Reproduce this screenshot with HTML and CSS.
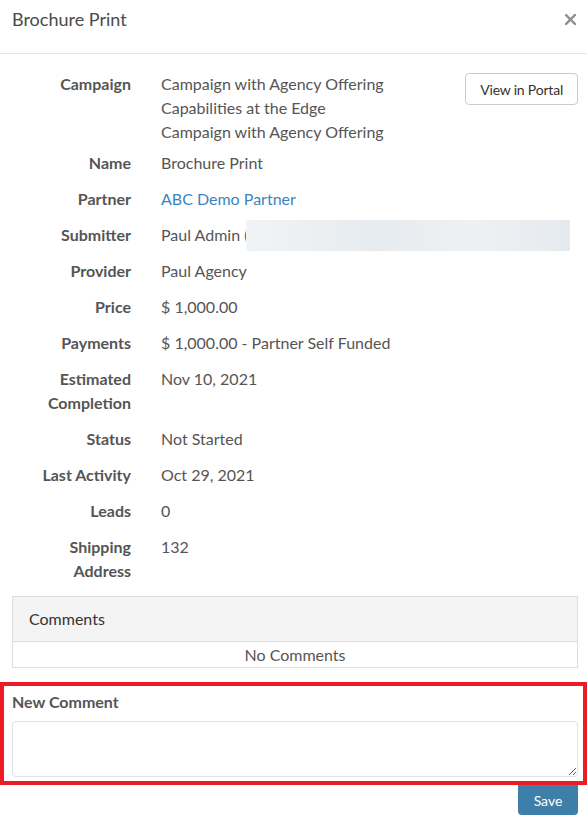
FILE: index.html
```html
<!DOCTYPE html>
<html>
<head>
    <title>Brochure Print</title>
    <link rel="stylesheet" href="styles.css">
</head>
<body>
    <div class="modal">
        <div class="modal-header">
            <h4 class="modal-title">Brochure Print</h4>
            <button class="close" aria-label="Close">
                <svg width="11" height="11" viewBox="0 0 11 11">
                    <path d="M1 1 L10 10 M10 1 L1 10" stroke="#8f8f8f" stroke-width="2.4" stroke-linecap="square"/>
                </svg>
            </button>
        </div>

        <div class="modal-body">
            <div class="details">
                <div class="row row-campaign">
                    <div class="label">Campaign</div>
                    <div class="value value-campaign">
                        <div class="lines">
                            <div>Campaign with Agency Offering</div>
                            <div>Capabilities at the Edge</div>
                            <div>Campaign with Agency Offering</div>
                        </div>
                        <button class="btn-default">View in Portal</button>
                    </div>
                </div>
                <div class="row">
                    <div class="label">Name</div>
                    <div class="value">Brochure Print</div>
                </div>
                <div class="row">
                    <div class="label">Partner</div>
                    <div class="value"><a href="#">ABC Demo Partner</a></div>
                </div>
                <div class="row">
                    <div class="label">Submitter</div>
                    <div class="value value-submitter">Paul Admin (<span class="redacted"></span></div>
                </div>
                <div class="row">
                    <div class="label">Provider</div>
                    <div class="value">Paul Agency</div>
                </div>
                <div class="row">
                    <div class="label">Price</div>
                    <div class="value">$ 1,000.00</div>
                </div>
                <div class="row">
                    <div class="label">Payments</div>
                    <div class="value">$ 1,000.00 - Partner Self Funded</div>
                </div>
                <div class="row">
                    <div class="label">Estimated<br>Completion</div>
                    <div class="value">Nov 10, 2021</div>
                </div>
                <div class="row">
                    <div class="label">Status</div>
                    <div class="value">Not Started</div>
                </div>
                <div class="row">
                    <div class="label">Last Activity</div>
                    <div class="value">Oct 29, 2021</div>
                </div>
                <div class="row">
                    <div class="label">Leads</div>
                    <div class="value">0</div>
                </div>
                <div class="row">
                    <div class="label">Shipping<br>Address</div>
                    <div class="value">132</div>
                </div>
            </div>

            <div class="panel">
                <div class="panel-heading">Comments</div>
                <div class="panel-body">No Comments</div>
            </div>

            <div class="new-comment">
                <label for="comment">New Comment</label>
                <textarea id="comment"></textarea>
            </div>

            <div class="actions">
                <button class="btn-primary">Save</button>
            </div>
        </div>
    </div>
</body>
</html>
```

FILE: styles.css
```css
body {
    margin: 0;
    background: #fff;
    font-family: Lato, "Open Sans", sans-serif;
    font-size: 16px;
    color: #555;
}
.modal {
    width: 587px;
}
.modal-header {
    display: flex;
    justify-content: space-between;
    align-items: flex-start;
    height: 46px;
    padding: 7px 11px 0 12px;
    border-bottom: 1px solid #e5e5e5;
}
.modal-title {
    margin: 0;
    font-size: 18px;
    font-weight: normal;
    line-height: 24px;
    color: #4a4a4a;
}
.close {
    background: none;
    border: none;
    padding: 0;
    margin-top: 6px;
    cursor: pointer;
}
.modal-body {
    padding: 12px 9px 12px 12px;
}
.row {
    display: grid;
    grid-template-columns: 119px 1fr;
    column-gap: 30px;
    padding: 6px 0;
    line-height: 24px;
}
.row-campaign {
    padding-bottom: 1px;
}
.label {
    text-align: right;
    font-weight: bold;
    color: #555;
}
.value-campaign {
    display: flex;
    justify-content: space-between;
    align-items: flex-start;
}
.value a {
    color: #3a85bd;
    text-decoration: none;
}
.value-submitter {
    display: flex;
    align-items: center;
    height: 24px;
}
.redacted {
    display: block;
    width: 324px;
    height: 31px;
    margin: -3px 0 -4px -2px;
    background: linear-gradient(90deg, #f1f4f6, #e6ebef 40%, #eef1f4 70%, #e5eaee);
}
.btn-default {
    font-family: Lato, sans-serif;
    font-size: 14px;
    color: #333;
    background: #fff;
    border: 1px solid #ccc;
    border-radius: 4px;
    padding: 0 14px;
    height: 32px;
    margin-top: 1px;
    letter-spacing: -0.2px;
}
.panel {
    margin-top: 7px;
    border: 1px solid #ddd;
}
.panel-heading {
    background: #f4f4f4;
    border-bottom: 1px solid #ddd;
    padding: 0 16px;
    height: 44px;
    line-height: 44px;
    color: #333;
}
.panel-body {
    text-align: center;
    line-height: 25px;
}
.new-comment {
    margin: 14px -9px 0 -12px;
    border: 4px solid #ed1c24;
    padding: 5px 5px 4px 8px;
}
.new-comment label {
    display: block;
    font-weight: bold;
    line-height: 22px;
    margin-bottom: 8px;
}
.new-comment textarea {
    display: block;
    box-sizing: border-box;
    width: 100%;
    height: 56px;
    margin: 0;
    border: 1px solid #dde3e8;
    border-radius: 4px;
}
.actions {
    display: flex;
    justify-content: flex-end;
}
.btn-primary {
    font-family: Lato, sans-serif;
    font-size: 14px;
    color: #fff;
    background: #3d7fa8;
    border: none;
    border-radius: 0 0 4px 4px;
    width: 60px;
    height: 30px;
}
```
